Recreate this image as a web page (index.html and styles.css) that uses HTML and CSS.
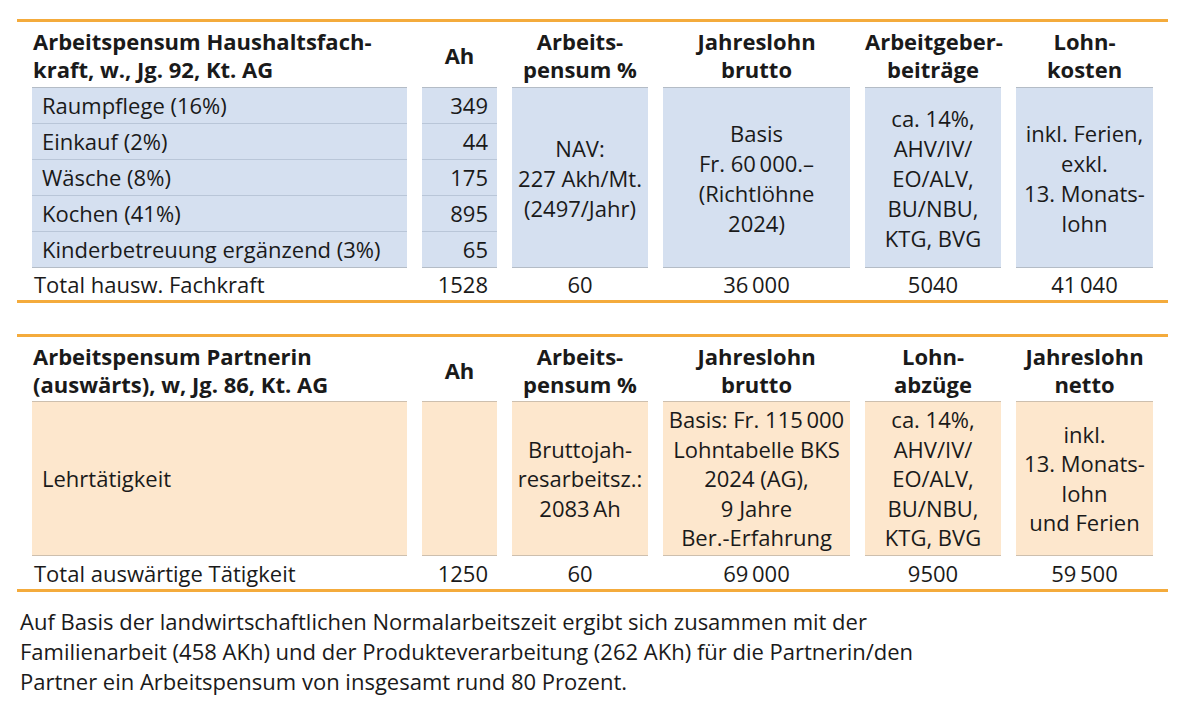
FILE: index.html
```html
<!DOCTYPE html>
<html lang="de">
<head>
<meta charset="utf-8">
<title>Arbeitspensum</title>
<link rel="stylesheet" href="styles.css">
</head>
<body>
<main class="page">
  <table class="tbl tbl-blue">
    <colgroup>
      <col class="c-label"><col class="c-ah"><col class="c-pens"><col class="c-lohn"><col class="c-beitr"><col class="c-kost">
    </colgroup>
    <thead>
      <tr>
        <th class="h-left">Arbeitspensum Haushaltsfach-<br>kraft, w., Jg. 92, Kt. AG</th>
        <th>Ah</th>
        <th>Arbeits-<br>pensum %</th>
        <th>Jahreslohn<br>brutto</th>
        <th>Arbeitgeber-<br>beiträge</th>
        <th>Lohn-<br>kosten</th>
      </tr>
    </thead>
    <tbody>
      <tr>
        <td class="lbl first">Raumpflege (16%)</td>
        <td class="num first">349</td>
        <td class="merged" rowspan="5">NAV:<br>227 Akh/Mt.<br>(2497/Jahr)</td>
        <td class="merged" rowspan="5">Basis<br>Fr. 60&#8201;000.–<br>(Richtlöhne<br>2024)</td>
        <td class="merged" rowspan="5">ca. 14%,<br>AHV/IV/<br>EO/ALV,<br>BU/NBU,<br>KTG, BVG</td>
        <td class="merged" rowspan="5">inkl. Ferien,<br>exkl.<br>13. Monats-<br>lohn</td>
      </tr>
      <tr><td class="lbl">Einkauf (2%)</td><td class="num">44</td></tr>
      <tr><td class="lbl">Wäsche (8%)</td><td class="num">175</td></tr>
      <tr><td class="lbl">Kochen (41%)</td><td class="num">895</td></tr>
      <tr><td class="lbl last">Kinderbetreuung ergänzend (3%)</td><td class="num last">65</td></tr>
    </tbody>
    <tfoot>
      <tr class="total">
        <td class="t-left">Total hausw. Fachkraft</td>
        <td class="num">1528</td>
        <td>60</td>
        <td>36&#8201;000</td>
        <td>5040</td>
        <td>41&#8201;040</td>
      </tr>
    </tfoot>
  </table>

  <table class="tbl tbl-orange">
    <colgroup>
      <col class="c-label"><col class="c-ah"><col class="c-pens"><col class="c-lohn"><col class="c-beitr"><col class="c-kost">
    </colgroup>
    <thead>
      <tr>
        <th class="h-left">Arbeitspensum Partnerin<br>(auswärts), w, Jg. 86, Kt. AG</th>
        <th>Ah</th>
        <th>Arbeits-<br>pensum %</th>
        <th>Jahreslohn<br>brutto</th>
        <th>Lohn-<br>abzüge</th>
        <th>Jahreslohn<br>netto</th>
      </tr>
    </thead>
    <tbody>
      <tr>
        <td class="lbl single">Lehrtätigkeit</td>
        <td class="num single"></td>
        <td class="merged single">Bruttojah-<br>resarbeitsz.:<br>2083&#8201;Ah</td>
        <td class="merged single">Basis: Fr. 115&#8201;000<br>Lohntabelle BKS<br>2024 (AG),<br>9 Jahre<br>Ber.-Erfahrung</td>
        <td class="merged single">ca. 14%,<br>AHV/IV/<br>EO/ALV,<br>BU/NBU,<br>KTG, BVG</td>
        <td class="merged single">inkl.<br>13. Monats-<br>lohn<br>und Ferien</td>
      </tr>
    </tbody>
    <tfoot>
      <tr class="total">
        <td class="t-left">Total auswärtige Tätigkeit</td>
        <td class="num">1250</td>
        <td>60</td>
        <td>69&#8201;000</td>
        <td>9500</td>
        <td>59&#8201;500</td>
      </tr>
    </tfoot>
  </table>

  <p class="note">Auf Basis der landwirtschaftlichen Normalarbeitszeit ergibt sich zusammen mit der<br>Familienarbeit (458 AKh) und der Produkteverarbeitung (262 AKh) für die Partnerin/den<br>Partner ein Arbeitspensum von insgesamt rund 80 Prozent.</p>
</main>
</body>
</html>
```

FILE: styles.css
```css
html, body {
  margin: 0;
  padding: 0;
  background: #ffffff;
}

body {
  font-family: "Open Sans", "Noto Sans", sans-serif;
  color: #1a1a1a;
  font-size: 22px;
}

.page {
  padding: 19px 0 0 17px;
}

.tbl {
  width: 1151px;
  table-layout: fixed;
  border-collapse: separate;
  border-spacing: 15px 0;
  border-top: 3px solid #f4ab3c;
  border-bottom: 3px solid #f4ab3c;
  margin: 0;
}

.tbl-blue {
  margin-bottom: 31px;
}

.c-label { width: 375px; }
.c-ah { width: 75px; }
.c-pens { width: 136px; }
.c-lohn { width: 187px; }
.c-beitr { width: 136px; }
.c-kost { width: 137px; }

.tbl th {
  font-weight: 700;
  font-size: 22px;
  line-height: 28px;
  padding: 5px 0 4px;
  text-align: center;
  vertical-align: middle;
  white-space: nowrap;
}

.tbl-orange th {
  padding: 5px 0 3px;
}

.tbl th.h-left {
  text-align: left;
  padding-left: 1px;
}

.tbl td {
  padding: 0;
  vertical-align: middle;
  white-space: nowrap;
}

.tbl-blue tbody td { background: #d5e0f0; }
.tbl-orange tbody td { background: #fde7cd; }

.tbl tbody td.lbl {
  padding: 2px 0 3px 10px;
  line-height: 30px;
  border-bottom: 1px solid #b9c6d8;
}

.tbl tbody td.num {
  padding: 2px 9px 3px 0;
  line-height: 30px;
  text-align: right;
  border-bottom: 1px solid #b9c6d8;
}

.tbl tbody td.first {
  border-top: 1px solid #b4bcc6;
}

.tbl tbody td.last {
  border-bottom: 1px solid #b4bcc6;
}

.tbl tbody td.merged {
  text-align: center;
  line-height: 30px;
  border-top: 1px solid #b4bcc6;
  border-bottom: 1px solid #b4bcc6;
}

.tbl-orange tbody td.single {
  border-top: 1px solid #cdbfae;
  border-bottom: 1px solid #cdbfae;
  line-height: 29.5px;
  padding-top: 3px;
  padding-bottom: 2px;
}

.tbl-orange tbody td.num.single {
  padding-right: 9px;
}

.tbl tfoot td {
  line-height: 30px;
  padding: 1px 0 1px;
  text-align: center;
}

.tbl-orange tfoot td {
  padding: 2px 0 1px;
}

.tbl tfoot td.t-left {
  text-align: left;
  padding-left: 2px;
}

.tbl tfoot td.num {
  text-align: right;
  padding-right: 9px;
}

.note {
  margin: 0;
  padding: 14px 0 0 3px;
  font-size: 22px;
  line-height: 30px;
}
```
